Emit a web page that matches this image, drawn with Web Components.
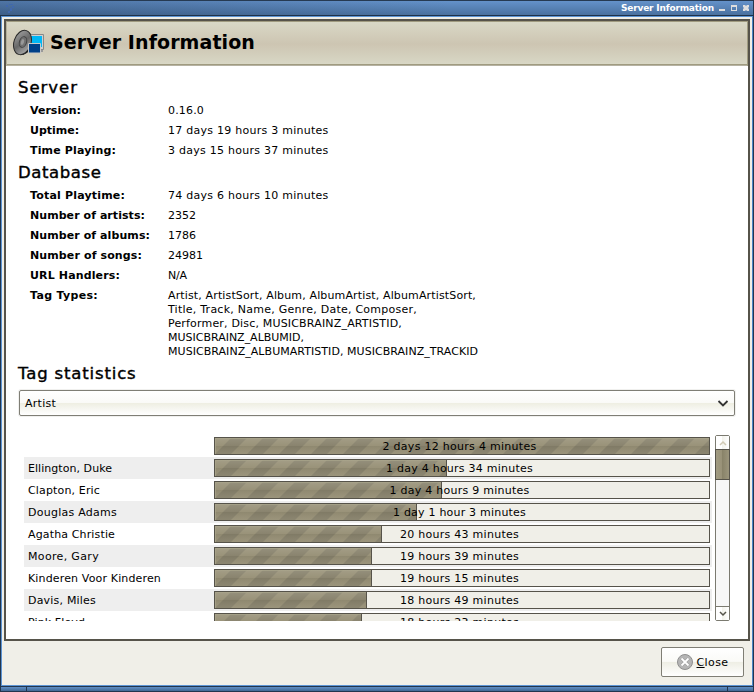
<!DOCTYPE html>
<html lang="en">
<head>
<meta charset="utf-8">
<title>Server Information</title>
<style>
html,body{margin:0;width:754px;height:692px;overflow:hidden}
body{font:11px/14px "DejaVu Sans",sans-serif;color:#000}
</style>
</head>
<body>
<app-window></app-window>
<script>
/* Text run with a given advance width, spread evenly over its letters. */
class FitText extends HTMLElement{
  constructor(){
    super();
    this.attachShadow({mode:'open'}).innerHTML='<style>:host{display:inline-block;white-space:pre}</style><span><slot></slot></span>';
  }
  connectedCallback(){
    const s=this.shadowRoot.querySelector('span'),w=+this.getAttribute('w'),n=this.textContent.length;
    if(w&&n>1){
      const d=(w-s.getBoundingClientRect().width)/n;
      s.style.letterSpacing=d.toFixed(3)+'px';
    }
  }
}

class TitleBar extends HTMLElement{
  constructor(){
    super();
    this.attachShadow({mode:'open'}).innerHTML=`<style>
:host{display:flex;align-items:center;height:16px;box-sizing:border-box;border-top:1px solid #263a52;border-bottom:1px solid #1e3148;
background:linear-gradient(90deg,rgba(30,50,80,.3),transparent 60%),linear-gradient(#6492ca,#4a719f);color:#fff;font:bold 9px/12px "DejaVu Sans",sans-serif;padding:0 4px 0 5px}
svg{display:block}.g{flex:1}.b{margin-left:4px}
</style>
<svg width="10" height="12"><path d="M1 3h2v2h-2zM4 2h4v1h-4zM7 4h2v2h-2zM5 6h2v3h-2zM3 9h2v2h-2z" fill="#4168ad"/></svg>
<span class="g"></span><slot></slot>
<svg class="b" width="31" height="14"><g fill="#dedede"><path d="M1 8h6v2h-6z"/><path d="M13 4h6v6h-6zM14 6v3h4v-3z" fill-rule="evenodd"/><path d="M25 4h2l1 1 1-1h2v2l-1 1 1 1v2h-2l-1-1-1 1h-2v-2l1-1-1-1z"/></g></svg>`;
  }
}

class DialogHeader extends HTMLElement{
  constructor(){
    super();
    this.attachShadow({mode:'open'}).innerHTML=`<style>
:host{display:flex;align-items:center;height:45px;box-sizing:border-box;border:1px solid #a09b80;border-left-color:#b5b19a;border-bottom:0;box-shadow:inset 0 -1px #b5b2a2,inset 0 -2px #a09b80;
background:linear-gradient(#d9d8c6,#cdc5b2 50%,#d8d7c5 95%);padding:0 0 3px 6px;font:bold 19px/24px "DejaVu Sans",sans-serif}
svg{display:block;margin-right:5px}::slotted(*){padding-bottom:2px}
</style>
<svg width="32" height="28" viewBox="0 0 32 28"><defs><linearGradient id="m" x2="1" y2="1"><stop stop-color="#aaa"/><stop offset=".5" stop-color="#686868"/><stop offset="1" stop-color="#c0c0c0"/></linearGradient></defs>
<path d="M12 2L17 4Q21 8 20 15Q18 23 10 26L5 25z" fill="#222"/>
<path d="M16 5.500h14.500v15h-14.500z" fill="#d0d0d0" stroke="#888"/><path d="M18 7h11v11h-11z" fill="#00b7f5"/><path d="M18 21h12v2h-12z" fill="#999"/>
<ellipse cx="9.500" cy="13.500" rx="8.500" ry="12.500" transform="rotate(18 9.500 13.500)" fill="url(#m)" stroke="#292929"/>
<ellipse cx="10" cy="13" rx="3.500" ry="5.500" transform="rotate(18 10 13)" fill="#707070" stroke="#444"/><ellipse cx="9.500" cy="13" rx="1.500" ry="3" transform="rotate(18 9.500 13)" fill="#999"/>
<path d="M15.500 14.500h12v9.500h-12z" fill="#004088" stroke="#c8c8c8"/></svg><slot></slot>`;
  }
}

class InfoSection extends HTMLElement{
  constructor(){
    super();
    this.attachShadow({mode:'open'}).innerHTML=`<style>
:host{display:block}h2{margin:0;height:25px;font:16.500px/23px "DejaVu Sans",sans-serif;-webkit-text-stroke:.4px #000}
div{padding-left:12px}
</style><h2><fit-text w="${this.getAttribute('w')}">${this.getAttribute('heading')}</fit-text></h2><div><slot></slot></div>`;
  }
}

class InfoRow extends HTMLElement{
  constructor(){
    super();
    this.attachShadow({mode:'open'}).innerHTML=`<style>
:host{display:grid;grid-template-columns:138px auto;min-height:14px;padding:3px 0}
b{font-weight:bold}.v{display:flex;flex-direction:column;align-items:flex-start}
</style><b><fit-text w="${this.getAttribute('w')}">${this.getAttribute('label')}</fit-text></b><span class="v"><slot></slot></span>`;
  }
}

class ComboBox extends HTMLElement{
  constructor(){
    super();
    this.attachShadow({mode:'open'}).innerHTML=`<style>
:host{display:flex;align-items:center;justify-content:space-between;box-sizing:border-box;height:26px;border:1px solid #7f7e75;border-radius:2px;padding:2px 5px 0 5px;
background:linear-gradient(#fff,#fafaf7 48%,#eeeee2 50%,#fff);box-shadow:0 0 0 1px #f0f0ee}
</style><slot></slot><svg width="12" height="8"><path d="M1.500 1L6 5.500L10.500 1" fill="none" stroke="#333" stroke-width="1.800"/></svg>`;
  }
}

class StatRow extends HTMLElement{
  constructor(){
    super();
    this.attachShadow({mode:'open'}).innerHTML=`<style>
:host{display:grid;grid-template-columns:186px 496px;height:22px;align-items:center;padding-left:4px;width:688px;box-sizing:border-box}
:host(:nth-child(even)){background:#eee}
.n{padding-top:2px}
.bar{height:18px;box-sizing:border-box;border:1px solid #56534a;background:#f0efe8;display:grid}
.bar>*{grid-area:1/1}
.fill{height:16px;box-sizing:border-box;width:${this.getAttribute('fill')}px;border-right:1px solid #56534a;overflow:hidden}
:host([fill="494"]) .fill{border-right:0}
.t{text-align:center;line-height:16px;padding:1px 5px 0 0;height:16px;box-sizing:border-box;z-index:1}
svg{display:block}
</style><span class="n"><fit-text w="${this.getAttribute('w')}">${this.getAttribute('name')}</fit-text></span>
<div class="bar"><div class="fill"><svg width="494" height="16"><defs>
<pattern id="p" width="32" height="16" patternUnits="userSpaceOnUse"><path d="M16 0h16l-16 16h-16z" fill="#87816b"/></pattern>
<linearGradient id="g" x2="0" y2="1"><stop stop-color="#fff" stop-opacity=".12"/><stop offset=".5" stop-color="#fff" stop-opacity=".02"/><stop offset=".52" stop-color="#000" stop-opacity=".05"/><stop offset="1" stop-color="#fff" stop-opacity=".04"/></linearGradient></defs>
<path d="M0 0h494v16H0z" fill="#979076"/><path d="M0 0h494v16H0z" fill="url(#p)"/><path d="M0 0h494v16H0z" fill="url(#g)"/><path d="M.5 16V.5H494" fill="none" stroke="#aaa58c" stroke-opacity=".7"/></svg></div>
<div class="t"><fit-text w="${this.getAttribute('tw')}">${this.getAttribute('time')}</fit-text></div></div>`;
  }
}

class ScrollRail extends HTMLElement{
  constructor(){
    super();
    this.attachShadow({mode:'open'}).innerHTML=`<style>
:host{display:flex;flex-direction:column;width:15px;height:186px;box-sizing:border-box;border:1px solid #7b7a70;border-radius:2px;background:#f7f7f7}
.b{height:13px;background:linear-gradient(90deg,#fff 48%,#f3f3ec 50%,#fff);display:flex;align-items:center;justify-content:center}
.th{height:29px;margin:0 -1px;border:1px solid #56534a;background:linear-gradient(90deg,#a19b82,#989177 48%,#898369 50%,#9b957c)}
.g{flex:1}.d{border-top:1px solid #7b7a70}
</style><div class="b"><svg width="8" height="6"><path d="M1 5L4 2L7 5" fill="none" stroke="#d0c9b4" stroke-width="1.500"/></svg></div><div class="th"></div><div class="g"></div>
<div class="b d"><svg width="8" height="6"><path d="M1 1L4 4L7 1" fill="none" stroke="#55534a" stroke-width="1.500"/></svg></div>`;
  }
}

class PushButton extends HTMLElement{
  constructor(){
    super();
    this.attachShadow({mode:'open'}).innerHTML=`<style>
:host{display:flex;align-items:center;justify-content:center;gap:4px;width:83px;height:30px;box-sizing:border-box;border:1px solid #7f7e75;border-radius:2px;background:linear-gradient(#fff,#fafaf7 48%,#eeeee4 50%,#fff)}
svg{display:block}::slotted(*){padding-top:2px}
</style><svg width="16" height="16"><circle cx="8" cy="8" r="7.500" fill="#b5b5b5" stroke="#909090"/><path d="M4.500 4.500l7 7M11.500 4.500l-7 7" stroke="#999" stroke-width="3"/><path d="M4.500 4.500l7 7M11.500 4.500l-7 7" stroke="#fff" stroke-width="1.800"/></svg><slot></slot>`;
  }
}

class AppWindow extends HTMLElement{
  constructor(){
    super();
    const rows=[["",0,"2 days 12 hours 4 minutes",154,494],["Ellington, Duke",84,"1 day 4 hours 34 minutes",147,232],["Clapton, Eric",72,"1 day 4 hours 9 minutes",140,227],["Douglas Adams",89,"1 day 1 hour 3 minutes",133,202],["Agatha Christie",87,"20 hours 43 minutes",119,167],["Moore, Gary",71,"19 hours 39 minutes",119,157],["Kinderen Voor Kinderen",133,"19 hours 15 minutes",119,157],["Davis, Miles",68,"18 hours 49 minutes",119,152],["Pink Floyd",57,"18 hours 23 minutes",119,147]];
    this.attachShadow({mode:'open'}).innerHTML=`<style>
:host{display:flex;flex-direction:column;width:754px;height:692px;box-sizing:border-box;background:#f0efe8;border:solid #22364e;border-width:0 1px 0 0}
.mid{flex:1;display:flex;flex-direction:column;border:1px solid #5c94d4;box-sizing:border-box;margin-left:1px;box-shadow:-1px 0 #22364e;padding:2px 0 0 2px;border-right-color:#4a86c6}
.frame{width:742px;height:618px;border:2px solid #56534a;background:#fff;display:flex;flex-direction:column}
.content{padding:10px 13px 0 12px;display:flex;flex-direction:column}
.combo{margin:3px 0 0 1px}
.stats{display:flex;justify-content:space-between;margin:19px 5px 0 6px}
.list{height:186px;overflow:hidden}
.foot{display:flex;justify-content:flex-end;padding:6px 8px 0 0}
.base{height:6px;box-sizing:border-box;border:1px solid #22364e;border-width:1px 0 1px 1px;background:linear-gradient(#5e8ec6,#416892);display:flex;justify-content:space-between}
.base i{width:25px}.base i:first-child{border-right:1px solid #22364e}.base i:last-child{border-left:1px solid #22364e}
</style>
<title-bar><fit-text w="93">Server Information</fit-text></title-bar>
<div class="mid"><div class="frame">
<dialog-header><fit-text w="205">Server Information</fit-text></dialog-header>
<div class="content">
<info-section heading="Server" w="60">
<info-row label="Version:" w="51"><fit-text w="36">0.16.0</fit-text></info-row>
<info-row label="Uptime:" w="49"><fit-text w="160.500">17 days 19 hours 3 minutes</fit-text></info-row>
<info-row label="Time Playing:" w="86"><fit-text w="160.500">3 days 15 hours 37 minutes</fit-text></info-row>
</info-section>
<info-section heading="Database" w="83.500">
<info-row label="Total Playtime:" w="95"><fit-text w="160.500">74 days 6 hours 10 minutes</fit-text></info-row>
<info-row label="Number of artists:" w="115"><fit-text w="28">2352</fit-text></info-row>
<info-row label="Number of albums:" w="120"><fit-text w="28">1786</fit-text></info-row>
<info-row label="Number of songs:" w="112"><fit-text w="35">24981</fit-text></info-row>
<info-row label="URL Handlers:" w="90"><fit-text w="19">N/A</fit-text></info-row>
<info-row label="Tag Types:" w="68"><fit-text w="308">Artist, ArtistSort, Album, AlbumArtist, AlbumArtistSort,</fit-text><fit-text w="249">Title, Track, Name, Genre, Date, Composer,</fit-text><fit-text w="234">Performer, Disc, MUSICBRAINZ_ARTISTID,</fit-text><fit-text w="136">MUSICBRAINZ_ALBUMID,</fit-text><fit-text w="310">MUSICBRAINZ_ALBUMARTISTID, MUSICBRAINZ_TRACKID</fit-text></info-row>
</info-section>
<info-section heading="Tag statistics" w="118.500"></info-section>
<combo-box class="combo"><fit-text w="31">Artist</fit-text></combo-box>
<div class="stats"><div class="list">${rows.map(r=>`<stat-row name="${r[0]}" w="${r[1]}" time="${r[2]}" tw="${r[3]}" fill="${r[4]}"></stat-row>`).join('')}</div><scroll-rail></scroll-rail></div>
</div></div>
<div class="foot"><push-button><fit-text w="32"><u>C</u>lose</fit-text></push-button></div></div>
<div class="base"><i></i><i></i></div>`;
  }
}
customElements.define('fit-text',FitText);
customElements.define('title-bar',TitleBar);
customElements.define('dialog-header',DialogHeader);
customElements.define('info-section',InfoSection);
customElements.define('info-row',InfoRow);
customElements.define('combo-box',ComboBox);
customElements.define('stat-row',StatRow);
customElements.define('scroll-rail',ScrollRail);
customElements.define('push-button',PushButton);
customElements.define('app-window',AppWindow);
</script>
</body>
</html>
